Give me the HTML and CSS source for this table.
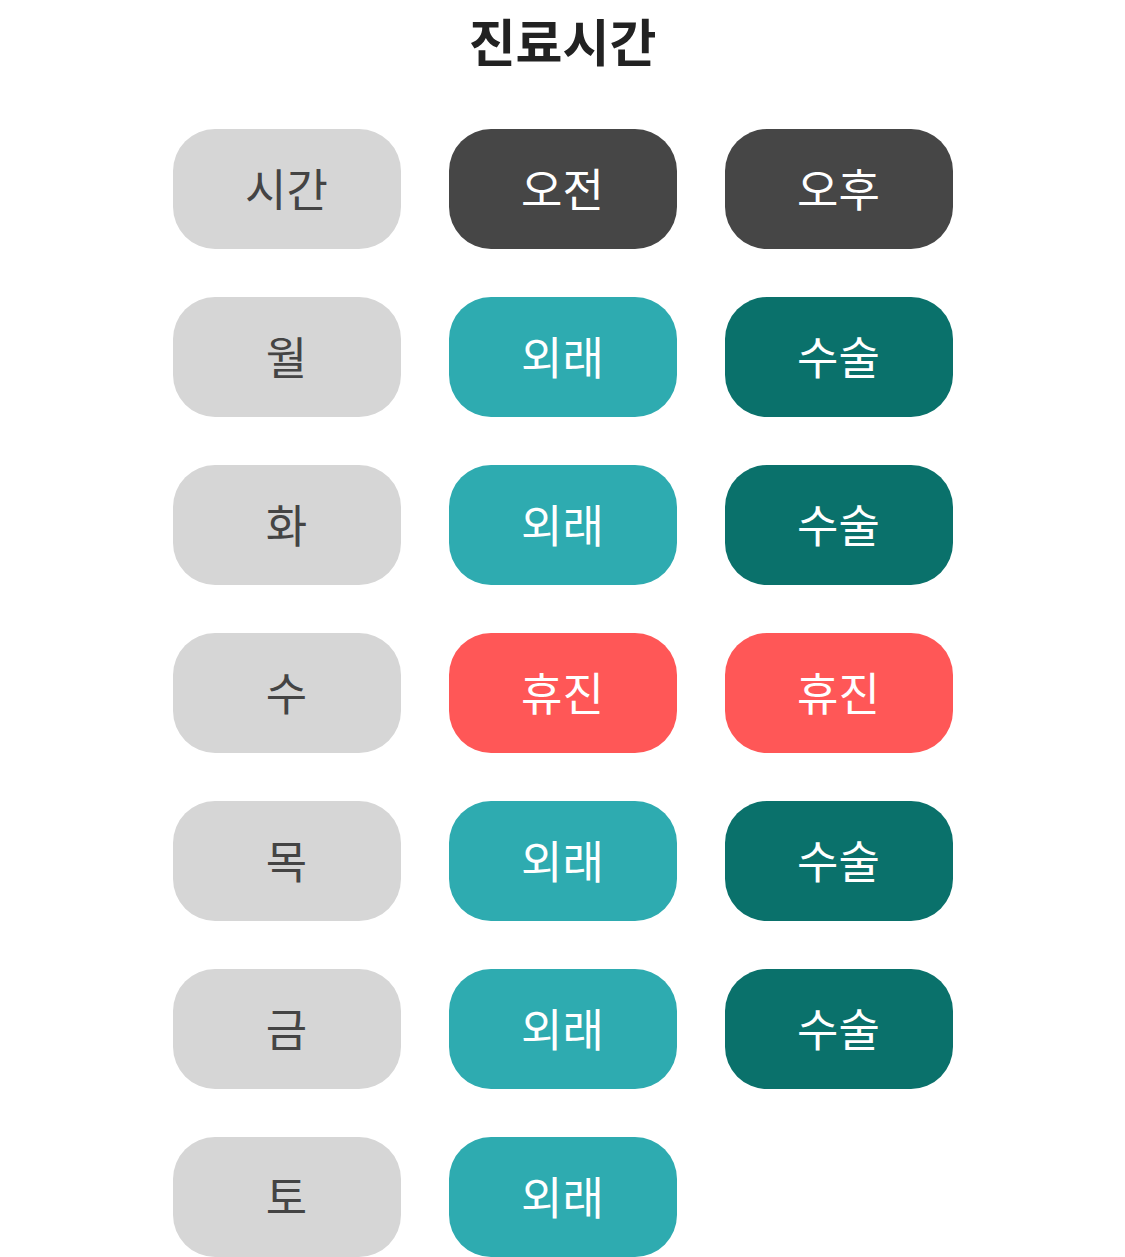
FILE: index.html
```html
<!DOCTYPE html>
<html lang="ko">
<head>
<meta charset="utf-8">
<title>진료시간</title>
<link rel="stylesheet" href="styles.css">
</head>
<body>
<main class="page">
  <h1 class="title">진료시간</h1>
  <div class="grid">
    <div class="pill label">시간</div>
    <div class="pill dark">오전</div>
    <div class="pill dark">오후</div>

    <div class="pill label">월</div>
    <div class="pill clinic">외래</div>
    <div class="pill surgery">수술</div>

    <div class="pill label">화</div>
    <div class="pill clinic">외래</div>
    <div class="pill surgery">수술</div>

    <div class="pill label">수</div>
    <div class="pill closed">휴진</div>
    <div class="pill closed">휴진</div>

    <div class="pill label">목</div>
    <div class="pill clinic">외래</div>
    <div class="pill surgery">수술</div>

    <div class="pill label">금</div>
    <div class="pill clinic">외래</div>
    <div class="pill surgery">수술</div>

    <div class="pill label">토</div>
    <div class="pill clinic">외래</div>
  </div>
</main>
</body>
</html>
```
FILE: styles.css
```css
html, body {
  margin: 0;
  padding: 0;
  background: #ffffff;
}
body {
  font-family: "Noto Sans CJK KR", "Noto Sans", sans-serif;
}
.page {
  display: flex;
  flex-direction: column;
  align-items: center;
}
.title {
  margin: 0;
  height: 80px;
  line-height: 80px;
  font-size: 51px;
  font-weight: 700;
  color: #222222;
}
.grid {
  margin-top: 49px;
  display: grid;
  grid-template-columns: repeat(3, 228px);
  grid-auto-rows: 120px;
  gap: 48px;
}
.pill {
  box-sizing: border-box;
  border-radius: 42px;
  display: flex;
  align-items: center;
  justify-content: center;
  padding-bottom: 4px;
  font-size: 45px;
  font-weight: 400;
  color: #ffffff;
}
.label {
  background: #d6d6d6;
  color: #444444;
}
.dark {
  background: #464646;
}
.clinic {
  background: #2eabb0;
}
.surgery {
  background: #0a716b;
}
.closed {
  background: #ff5757;
}
```
